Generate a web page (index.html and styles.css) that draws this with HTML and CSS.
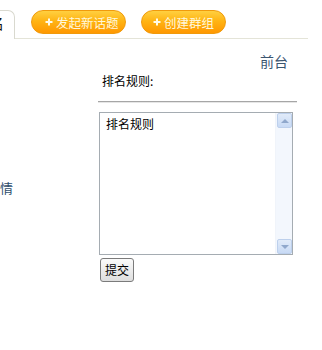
FILE: index.html
```html
<!DOCTYPE html>
<html>
<head>
<meta charset="utf-8">
<link rel="stylesheet" href="styles.css">
</head>
<body>
<div class="topbar">
  <div class="tab"><span class="tab-text">名</span></div>
  <div class="tools">
    <a class="btn btn-topic"><svg class="plus" width="8" height="8" viewBox="0 0 8 8"><path d="M4 0.5V7.5M0.5 4H7.5" stroke="#fffbe8" stroke-width="2"/></svg><span>发起新话题</span></a>
    <a class="btn btn-group"><svg class="plus" width="8" height="8" viewBox="0 0 8 8"><path d="M4 0.5V7.5M0.5 4H7.5" stroke="#fffbe8" stroke-width="2"/></svg><span>创建群组</span></a>
  </div>
</div>
<div class="main">
  <div class="side"><span class="side-link">情</span></div>
  <div class="content">
    <div class="front">前台</div>
    <div class="label">排名规则:</div>
    <div class="rule"></div>
    <div class="textarea">
      <div class="ta-text">排名规则</div>
      <div class="scrollbar">
        <div class="sb-btn"><span class="arrow-up"></span></div>
        <div class="sb-track"></div>
        <div class="sb-btn"><span class="arrow-down"></span></div>
      </div>
    </div>
    <button class="submit">提交</button>
  </div>
</div>
</body>
</html>
```
FILE: styles.css
```css
html, body {
  margin: 0;
  padding: 0;
  background: #ffffff;
}
body {
  font-family: "Noto Sans CJK SC", "Liberation Sans", sans-serif;
  font-size: 12px;
  color: #000;
}
.topbar {
  display: flex;
  width: 308px;
  height: 39px;
}
.tab {
  width: 14px;
  margin-top: 10px;
  border-top: 1px solid #d9d9cf;
  border-right: 1px solid #d9d9cf;
  border-top-right-radius: 7px;
  white-space: nowrap;
  overflow: hidden;
}
.tab-text {
  display: inline-block;
  margin-left: -11px;
  margin-top: 3px;
  font-size: 15px;
  line-height: 17px;
  color: #111;
}
.tools {
  flex: 1;
  display: flex;
  align-items: flex-start;
  gap: 15px;
  padding: 10px 0 0 16px;
  border-bottom: 1px solid #e4e4d8;
}
.btn {
  display: flex;
  align-items: center;
  box-sizing: border-box;
  height: 24px;
  border-radius: 12px;
  border: 1px solid #f09a0c;
  background: linear-gradient(to bottom, #ffd040 0%, #ffb414 45%, #ff9800 100%);
  color: #fff8dc;
  font-size: 12.5px;
  line-height: 15px;
  text-decoration: none;
}
.btn-topic {
  width: 95px;
  padding-left: 13px;
}
.btn-group {
  width: 85px;
  padding-left: 11px;
}
.plus {
  margin-right: 3px;
  flex: none;
}
.main {
  display: flex;
}
.side {
  width: 98px;
  padding-top: 140px;
}
.side-link {
  font-size: 13px;
  line-height: 15px;
  color: #2e4d6c;
}
.content {
  width: 199px;
}
.front {
  text-align: right;
  padding: 14px 9px 0 0;
  font-size: 14px;
  line-height: 16px;
  color: #3b5570;
}
.label {
  margin-top: 5px;
  padding-left: 4px;
  font-size: 12px;
  line-height: 14px;
}
.rule {
  margin-top: 13px;
  border-top: 1px solid #a6a6a6;
  border-bottom: 1px solid #e6e6e6;
}
.textarea {
  display: flex;
  box-sizing: border-box;
  width: 194px;
  height: 143px;
  margin: 9px 0 0 1px;
  border: 1px solid #a5acb2;
  background: #fff;
}
.ta-text {
  flex: 1;
  padding: 4px 0 0 6px;
  font-size: 12px;
  line-height: 14px;
}
.scrollbar {
  width: 17px;
  box-sizing: border-box;
  padding: 0 1px;
  display: flex;
  flex-direction: column;
  background: #f3f7fd;
  border-left: 1px solid #f0f4fa;
}
.sb-btn {
  box-sizing: border-box;
  width: 15px;
  height: 15px;
  border: 1px solid #bdd0ec;
  border-radius: 2px;
  background: linear-gradient(to bottom, #e1ebf9, #c8daf5);
  display: flex;
  align-items: center;
  justify-content: center;
}
.sb-track {
  flex: 1;
}
.arrow-up {
  width: 0;
  height: 0;
  border-left: 4px solid transparent;
  border-right: 4px solid transparent;
  border-bottom: 4px solid #90a8cc;
}
.arrow-down {
  width: 0;
  height: 0;
  border-left: 4px solid transparent;
  border-right: 4px solid transparent;
  border-top: 4px solid #90a8cc;
}
.submit {
  display: block;
  box-sizing: border-box;
  width: 34px;
  height: 24px;
  margin: 3px 0 0 2px;
  padding: 0;
  border: 1px solid #7b7b7b;
  border-radius: 3px;
  background: linear-gradient(to bottom, #fbfbfb, #dedede);
  font-family: "Noto Sans CJK SC", sans-serif;
  font-size: 12px;
  line-height: 14px;
  color: #000;
}
```
